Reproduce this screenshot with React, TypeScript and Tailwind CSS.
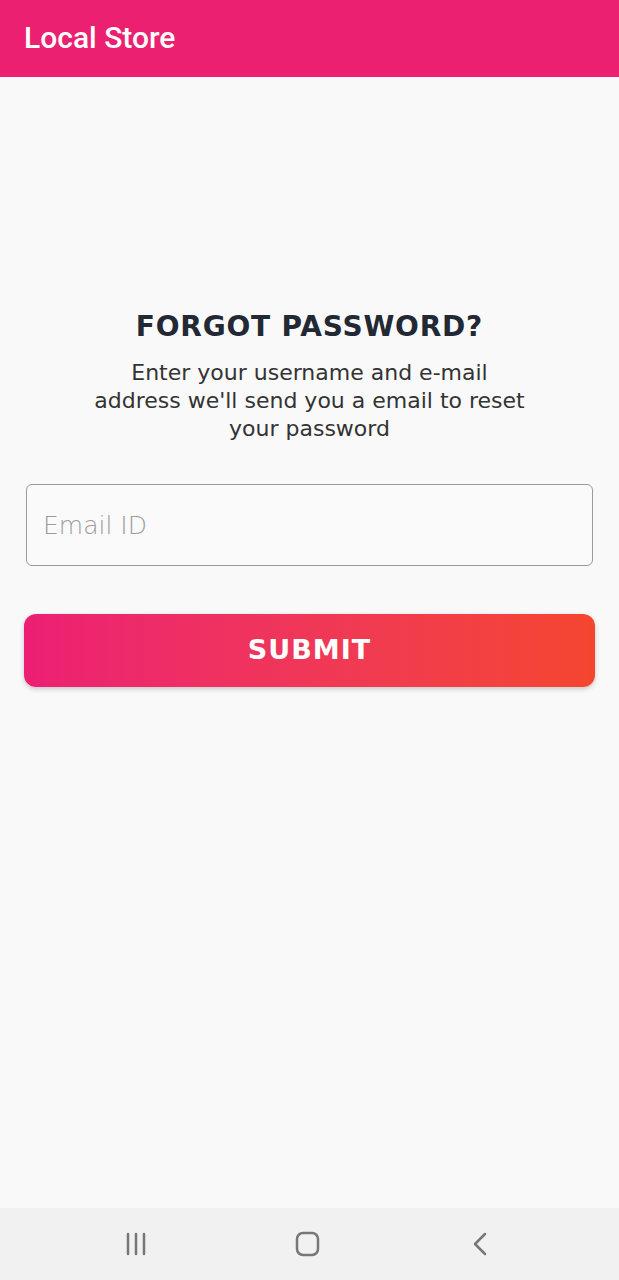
export default function App() {
  return (
    <div className="flex h-[1280px] w-[619px] flex-col bg-[#f9f9f9] font-['DejaVu_Sans',sans-serif]">
      {/* App bar */}
      <header className="flex h-[77px] items-center bg-[#ec2070] px-6 pb-[3px]">
        <h1 className="font-['Roboto',sans-serif] text-[30px] font-medium text-white">Local Store</h1>
      </header>

      {/* Content */}
      <main className="flex flex-1 flex-col px-6 pt-[229px]">
        <h2 className="text-center text-[28px] font-bold tracking-[0.8px] text-[#222834]">FORGOT PASSWORD?</h2>
        <p className="mx-auto mt-[11px] text-center text-[22px] leading-[28px] text-[#333]">
          Enter your username and e-mail
          <br />
          address we'll send you a email to reset
          <br />
          your password
        </p>

        <input
          type="email"
          placeholder="Email ID"
          className="mx-[2px] mt-[41px] h-[82px] rounded-[6px] border-[1.5px] border-[#9a9a9a] bg-[#fafafa] px-4 text-[25px] font-light text-[#333] outline-none placeholder:text-[#9c9c9c]"
        />

        <button className="mt-[48px] h-[73px] rounded-[12px] bg-gradient-to-r from-[#ec1f74] to-[#f4462e] text-[27px] font-bold tracking-[1px] text-white shadow-[0_2px_5px_rgba(0,0,0,0.2)]">
          SUBMIT
        </button>
      </main>

      {/* System nav bar */}
      <nav className="flex h-[72px] items-center justify-center gap-[146px] bg-[#f1f1f1] pr-[4px]">
        <svg width="26" height="26" viewBox="0 0 26 26" className="text-[#777]">
          <g stroke="currentColor" strokeWidth="2.5" strokeLinecap="round">
            <line x1="5" y1="3" x2="5" y2="23" />
            <line x1="13" y1="3" x2="13" y2="23" />
            <line x1="21" y1="3" x2="21" y2="23" />
          </g>
        </svg>
        <svg width="26" height="26" viewBox="0 0 26 26" className="text-[#777]">
          <rect x="2" y="2" width="21" height="22" rx="6" fill="none" stroke="currentColor" strokeWidth="2.5" />
        </svg>
        <svg width="26" height="26" viewBox="0 0 26 26" className="text-[#777]">
          <polyline points="18,3 8,13 18,23" fill="none" stroke="currentColor" strokeWidth="2.5" strokeLinecap="round" strokeLinejoin="round" />
        </svg>
      </nav>
    </div>
  );
}
